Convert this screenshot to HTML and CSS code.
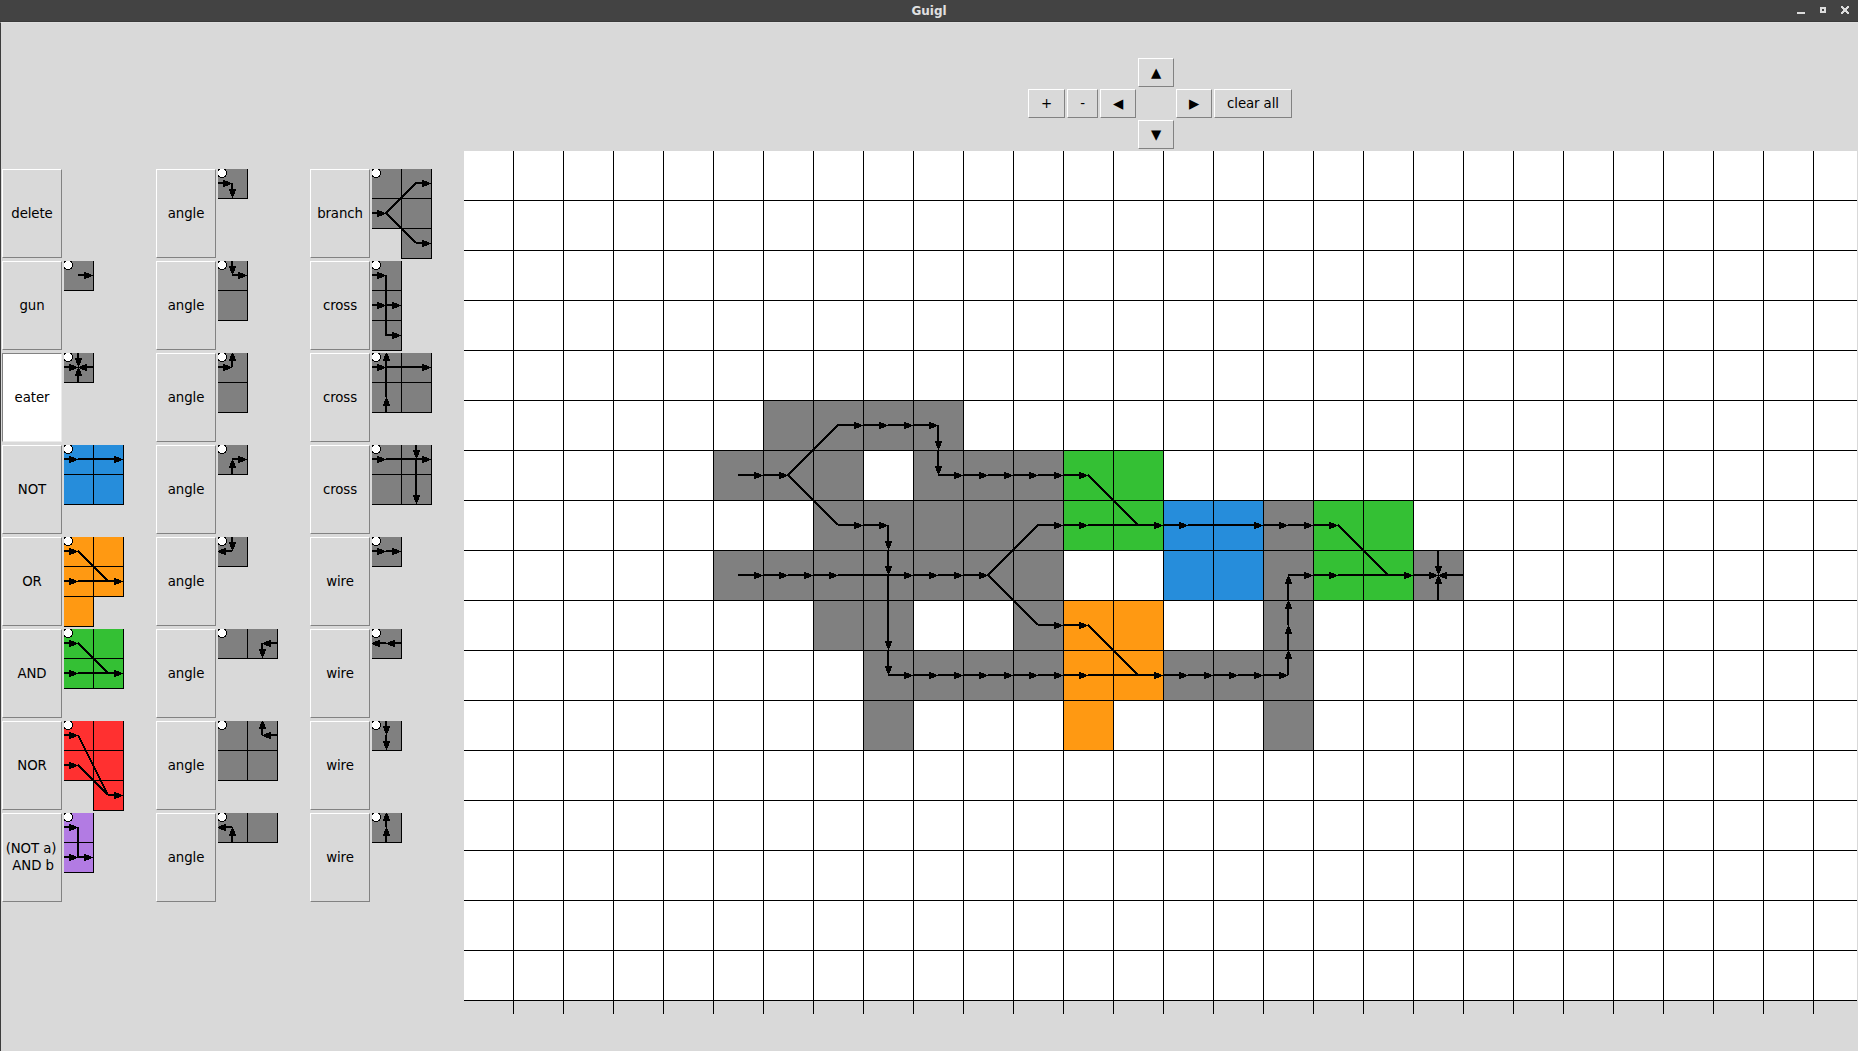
FILE: index.html
```html
<!DOCTYPE html>
<html lang="en">
<head>
<meta charset="utf-8">
<title>Guigl</title>
<link rel="stylesheet" href="styles.css">
</head>
<body>
<header class="titlebar">
  <span class="title">Guigl</span>
  <svg class="winbtns" width="110" height="21" shape-rendering="crispEdges">
    <rect x="49" y="12" width="8" height="2"/>
    <path fill-rule="evenodd" d="M72 7h6v6h-6zM74 9v2h2v-2z"/>
    <path d="M93 6h2v1h1v1h2v-1h1v-1h2v2h-1v1h-1v2h1v1h1v2h-2v-1h-1v-1h-2v1h-1v1h-2v-2h1v-1h1v-2h-1v-1h-1z"/>
  </svg>
</header>
<main class="window">
  <nav class="controls">
    <button class="btn zoom-in">+</button>
    <button class="btn zoom-out">-</button>
    <button class="btn left">◀</button>
    <button class="btn up">▲</button>
    <button class="btn down">▼</button>
    <button class="btn right">▶</button>
    <button class="btn clear">clear all</button>
  </nav>
  <div class="work">
    <section class="palette">
      <div class="tool"><button class="btn">delete</button></div>
      <div class="tool"><button class="btn">gun</button><svg class="piece wire" viewBox="1 1 61 90"><path class="cell" d="M.5.5h30v30h-30z"/><circle cx="5" cy="5" r="4.5"/><use href="#r" x="15" y="15"/></svg></div>
      <div class="tool"><button class="btn selected">eater</button><svg class="piece wire" viewBox="1 1 61 90"><path class="cell" d="M.5.5h30v30h-30z"/><circle cx="5" cy="5" r="4.5"/><use href="#r" x="0" y="15"/><use href="#l" x="30" y="15"/><use href="#d" x="15" y="0"/><use href="#u" x="15" y="30"/></svg></div>
      <div class="tool"><button class="btn">NOT</button><svg class="piece not" viewBox="1 1 61 90"><path class="cell" d="M.5.5h60v60h-60zM30.5.5v60M.5 30.5h60"/><circle cx="5" cy="5" r="4.5"/><use href="#r" x="0" y="15"/><path class="ln" d="M15 15H45"/><use href="#r" x="45" y="15"/></svg></div>
      <div class="tool"><button class="btn">OR</button><svg class="piece or" viewBox="1 1 61 90"><path class="cell" d="M.5.5h60v60h-30v30h-30zM30.5.5v60M.5 30.5h60M.5 60.5h30"/><circle cx="5" cy="5" r="4.5"/><use href="#r" x="0" y="15"/><use href="#r" x="0" y="45"/><path class="ln" d="M15 15L45 45M15 45H45"/><use href="#r" x="45" y="45"/></svg></div>
      <div class="tool"><button class="btn">AND</button><svg class="piece and" viewBox="1 1 61 90"><path class="cell" d="M.5.5h60v60h-60zM30.5.5v60M.5 30.5h60"/><circle cx="5" cy="5" r="4.5"/><use href="#r" x="0" y="15"/><use href="#r" x="0" y="45"/><path class="ln" d="M15 15L45 45M15 45H45"/><use href="#r" x="45" y="45"/></svg></div>
      <div class="tool"><button class="btn">NOR</button><svg class="piece nor" viewBox="1 1 61 90"><path class="cell" d="M.5.5h60v90h-30v-30h-30zM30.5.5v60M.5 30.5h60M30.5 60.5h30"/><circle cx="5" cy="5" r="4.5"/><use href="#r" x="0" y="15"/><use href="#r" x="0" y="45"/><path class="ln" d="M15 15L45 75M15 45L45 75"/><use href="#r" x="45" y="75"/></svg></div>
      <div class="tool"><button class="btn two-line">(NOT a)<br>&nbsp;AND b</button><svg class="piece nand" viewBox="1 1 61 90"><path class="cell" d="M.5.5h30v60h-30zM.5 30.5h30"/><circle cx="5" cy="5" r="4.5"/><use href="#r" x="0" y="15"/><use href="#r" x="0" y="45"/><path class="ln" d="M15 15V46"/><use href="#r" x="15" y="45"/></svg></div>

      <div class="tool"><button class="btn">angle</button><svg class="piece wire" viewBox="1 1 61 90"><path class="cell" d="M.5.5h30v30h-30z"/><circle cx="5" cy="5" r="4.5"/><use href="#r" x="0" y="15"/><use href="#d" x="15" y="15"/></svg></div>
      <div class="tool"><button class="btn">angle</button><svg class="piece wire" viewBox="1 1 61 90"><path class="cell" d="M.5.5h30v60h-30zM.5 30.5h30"/><circle cx="5" cy="5" r="4.5"/><use href="#d" x="15" y="0"/><use href="#r" x="15" y="15"/></svg></div>
      <div class="tool"><button class="btn">angle</button><svg class="piece wire" viewBox="1 1 61 90"><path class="cell" d="M.5.5h30v60h-30zM.5 30.5h30"/><circle cx="5" cy="5" r="4.5"/><use href="#r" x="0" y="15"/><use href="#u" x="15" y="15"/></svg></div>
      <div class="tool"><button class="btn">angle</button><svg class="piece wire" viewBox="1 1 61 90"><path class="cell" d="M.5.5h30v30h-30z"/><circle cx="5" cy="5" r="4.5"/><use href="#u" x="15" y="30"/><use href="#r" x="15" y="15"/></svg></div>
      <div class="tool"><button class="btn">angle</button><svg class="piece wire" viewBox="1 1 61 90"><path class="cell" d="M.5.5h30v30h-30z"/><circle cx="5" cy="5" r="4.5"/><use href="#d" x="15" y="0"/><use href="#l" x="15" y="15"/></svg></div>
      <div class="tool"><button class="btn">angle</button><svg class="piece wire" viewBox="1 1 61 90"><path class="cell" d="M.5.5h60v30h-60zM30.5.5v30"/><circle cx="5" cy="5" r="4.5"/><use href="#l" x="60" y="15"/><use href="#d" x="45" y="15"/></svg></div>
      <div class="tool"><button class="btn">angle</button><svg class="piece wire" viewBox="1 1 61 90"><path class="cell" d="M.5.5h60v60h-60zM30.5.5v60M.5 30.5h60"/><circle cx="5" cy="5" r="4.5"/><use href="#l" x="60" y="15"/><use href="#u" x="45" y="15"/></svg></div>
      <div class="tool"><button class="btn">angle</button><svg class="piece wire" viewBox="1 1 61 90"><path class="cell" d="M.5.5h60v30h-60zM30.5.5v30"/><circle cx="5" cy="5" r="4.5"/><use href="#u" x="15" y="30"/><use href="#l" x="15" y="15"/></svg></div>

      <div class="tool"><button class="btn">branch</button><svg class="piece wire" viewBox="1 1 61 90"><path class="cell" d="M.5.5h60v90h-30v-30h-30zM30.5.5v60M.5 30.5h60M30.5 60.5h30"/><circle cx="5" cy="5" r="4.5"/><use href="#r" x="0" y="45"/><path class="ln" d="M45 15L15 45L45 75"/><use href="#r" x="45" y="15"/><use href="#r" x="45" y="75"/></svg></div>
      <div class="tool"><button class="btn">cross</button><svg class="piece wire" viewBox="1 1 61 90"><path class="cell" d="M.5.5h30v90h-30zM.5 30.5h30M.5 60.5h30"/><circle cx="5" cy="5" r="4.5"/><use href="#r" x="0" y="15"/><use href="#r" x="0" y="45"/><use href="#r" x="15" y="45"/><path class="ln" d="M15 15V76"/><use href="#r" x="15" y="75"/></svg></div>
      <div class="tool"><button class="btn">cross</button><svg class="piece wire" viewBox="1 1 61 90"><path class="cell" d="M.5.5h60v60h-60zM30.5.5v60M.5 30.5h60"/><circle cx="5" cy="5" r="4.5"/><use href="#r" x="0" y="15"/><use href="#u" x="15" y="60"/><path class="ln" d="M15 15H45M15 45V15"/><use href="#r" x="45" y="15"/><use href="#u" x="15" y="15"/></svg></div>
      <div class="tool"><button class="btn">cross</button><svg class="piece wire" viewBox="1 1 61 90"><path class="cell" d="M.5.5h60v60h-60zM30.5.5v60M.5 30.5h60"/><circle cx="5" cy="5" r="4.5"/><use href="#r" x="0" y="15"/><use href="#d" x="45" y="0"/><path class="ln" d="M15 15H45M45 15V45"/><use href="#r" x="45" y="15"/><use href="#d" x="45" y="45"/></svg></div>
      <div class="tool"><button class="btn">wire</button><svg class="piece wire" viewBox="1 1 61 90"><path class="cell" d="M.5.5h30v30h-30z"/><circle cx="5" cy="5" r="4.5"/><use href="#r" x="0" y="15"/><use href="#r" x="15" y="15"/></svg></div>
      <div class="tool"><button class="btn">wire</button><svg class="piece wire" viewBox="1 1 61 90"><path class="cell" d="M.5.5h30v30h-30z"/><circle cx="5" cy="5" r="4.5"/><use href="#l" x="30" y="15"/><use href="#l" x="15" y="15"/></svg></div>
      <div class="tool"><button class="btn">wire</button><svg class="piece wire" viewBox="1 1 61 90"><path class="cell" d="M.5.5h30v30h-30z"/><circle cx="5" cy="5" r="4.5"/><use href="#d" x="15" y="0"/><use href="#d" x="15" y="15"/></svg></div>
      <div class="tool"><button class="btn">wire</button><svg class="piece wire" viewBox="1 1 61 90"><path class="cell" d="M.5.5h30v30h-30z"/><circle cx="5" cy="5" r="4.5"/><use href="#u" x="15" y="30"/><use href="#u" x="15" y="15"/></svg></div>
    </section>

    <svg class="board" width="1393" height="863" viewBox="1 1 1393 863" shape-rendering="crispEdges">
      <defs>
        <!-- arrow heads, tip at the origin -->
        <path id="hr" d="M0 0V1H-2V2H-4V3H-7V4H-9V-3H-7V-2H-4V-1H-2V0z"/>
        <path id="hl" d="M0 0V1H2V2H4V3H7V4H9V-3H7V-2H4V-1H2V0z"/>
        <path id="hd" d="M0 0H1V-2H2V-4H3V-7H4V-9H-3V-7H-2V-4H-1V-2H0z"/>
        <path id="hu" d="M0 0H1V2H2V4H3V7H4V9H-3V7H-2V4H-1V2H0z"/>
        <!-- 15px arrows for the palette -->
        <g id="r"><path class="ln" d="M0 0H7"/><use href="#hr" x="15"/></g>
        <g id="l"><path class="ln" d="M0 0H-7"/><use href="#hl" x="-15"/></g>
        <g id="d"><path class="ln" d="M0 0V7"/><use href="#hd" y="15"/></g>
        <g id="u"><path class="ln" d="M0 0V-7"/><use href="#hu" y="-15"/></g>
        <!-- 25px arrows for the board -->
        <g id="R"><path class="ln" d="M0 0H17"/><use href="#hr" x="25"/></g>
        <g id="L"><path class="ln" d="M0 0H-17"/><use href="#hl" x="-25"/></g>
        <g id="D"><path class="ln" d="M0 0V17"/><use href="#hd" y="25"/></g>
        <g id="U"><path class="ln" d="M0 0V-17"/><use href="#hu" y="-25"/></g>
        <pattern id="grid" width="50" height="50" patternUnits="userSpaceOnUse"><path d="M0 0H50V1H1V50H0z"/></pattern>
      </defs>
      <rect width="1394" height="850" fill="#fff"/>
      <g fill="#808080">
        <path d="M300 250h200v50h-200zM250 300h150v50h-150zM450 300h150v50h-150zM350 350h250v50h-250zM250 400h350v50h-350zM350 450h100v50h-100zM550 450h50v50h-50zM400 500h200v50h-200zM400 550h50v50h-50z"/>
        <path d="M800 350h50v250h-50zM700 500h100v50h-100zM950 400h50v50h-50z"/>
      </g>
      <path fill="#34c034" d="M600 300h100v100h-100zM850 350h100v100h-100z"/>
      <path fill="#268ddb" d="M700 350h100v100h-100z"/>
      <path fill="#ff9912" d="M600 450h100v100h-50v50h-50z"/>
      <rect width="1394" height="851" fill="url(#grid)"/>
      <path d="M50.5 851V864M100.5 851V864M150.5 851V864M200.5 851V864M250.5 851V864M300.5 851V864M350.5 851V864M400.5 851V864M450.5 851V864M500.5 851V864M550.5 851V864M600.5 851V864M650.5 851V864M700.5 851V864M750.5 851V864M800.5 851V864M850.5 851V864M900.5 851V864M950.5 851V864M1000.5 851V864M1050.5 851V864M1100.5 851V864M1150.5 851V864M1200.5 851V864M1250.5 851V864M1300.5 851V864M1350.5 851V864" stroke="#000"/>
      <path class="ln" d="M375 275L325 325L375 375M575 375L525 425L575 475M625 325L675 375M625 475L675 525M875 375L925 425M625 375H675M625 525H675M725 375H775M875 425H925M375 425H425M425 425V475"/>
      <use href="#R" x="375" y="275"/><use href="#R" x="400" y="275"/><use href="#R" x="425" y="275"/><use href="#R" x="450" y="275"/>
      <use href="#D" x="475" y="275"/><use href="#D" x="475" y="300"/>
      <use href="#R" x="275" y="325"/><use href="#R" x="300" y="325"/>
      <use href="#R" x="475" y="325"/><use href="#R" x="500" y="325"/><use href="#R" x="525" y="325"/><use href="#R" x="550" y="325"/><use href="#R" x="575" y="325"/><use href="#R" x="600" y="325"/>
      <use href="#R" x="375" y="375"/><use href="#R" x="400" y="375"/>
      <use href="#D" x="425" y="375"/><use href="#D" x="425" y="400"/><use href="#D" x="425" y="475"/><use href="#D" x="425" y="500"/>
      <use href="#R" x="575" y="375"/><use href="#R" x="600" y="375"/><use href="#R" x="675" y="375"/><use href="#R" x="700" y="375"/><use href="#R" x="775" y="375"/><use href="#R" x="800" y="375"/><use href="#R" x="825" y="375"/><use href="#R" x="850" y="375"/>
      <use href="#R" x="275" y="425"/><use href="#R" x="300" y="425"/><use href="#R" x="325" y="425"/><use href="#R" x="350" y="425"/><use href="#R" x="425" y="425"/><use href="#R" x="450" y="425"/><use href="#R" x="475" y="425"/><use href="#R" x="500" y="425"/>
      <use href="#R" x="825" y="425"/><use href="#R" x="850" y="425"/><use href="#R" x="925" y="425"/><use href="#R" x="950" y="425"/>
      <use href="#D" x="975" y="400"/><use href="#U" x="975" y="450"/><use href="#L" x="1000" y="425"/>
      <use href="#R" x="575" y="475"/><use href="#R" x="600" y="475"/>
      <use href="#R" x="425" y="525"/><use href="#R" x="450" y="525"/><use href="#R" x="475" y="525"/><use href="#R" x="500" y="525"/><use href="#R" x="525" y="525"/><use href="#R" x="550" y="525"/><use href="#R" x="575" y="525"/><use href="#R" x="600" y="525"/><use href="#R" x="675" y="525"/><use href="#R" x="700" y="525"/><use href="#R" x="725" y="525"/><use href="#R" x="750" y="525"/><use href="#R" x="775" y="525"/><use href="#R" x="800" y="525"/>
      <use href="#U" x="825" y="525"/><use href="#U" x="825" y="500"/><use href="#U" x="825" y="475"/><use href="#U" x="825" y="450"/>
    </svg>
  </div>
</main>
</body>
</html>
```
FILE: styles.css
```css
* { box-sizing: border-box; }
body {
  margin: 0;
  height: 1051px;
  display: flex;
  flex-direction: column;
  overflow: hidden;
  background: #d9d9d9;
  font: 13.33px/17px "DejaVu Sans", sans-serif;
  color: #000;
}
.titlebar {
  height: 22px;
  display: grid;
  grid-template-columns: 110px 1fr 110px;
  background: #434343;
  border-bottom: 1px solid #3a3a3a;
}
.title {
  grid-column: 2;
  text-align: center;
  font-weight: bold;
  font-size: 12px;
  line-height: 22px;
  color: #e0e0e0;
}
.winbtns { fill: #dcdcdc; }
.window {
  flex: 1;
  display: flex;
  flex-direction: column;
  border-left: 1px solid #3c3c3c;
  border-top: 1px solid #dfdfdf;
}
.controls {
  display: grid;
  grid-template: repeat(3, 29px) / 37px 31px 36px 36px 36px 78px;
  gap: 2px;
  padding: 35px 0 2px 1027px;
}
.zoom-in { grid-area: 2 / 1; }
.zoom-out { grid-area: 2 / 2; }
.left { grid-area: 2 / 3; }
.up { grid-area: 1 / 4; }
.down { grid-area: 3 / 4; }
.right { grid-area: 2 / 5; }
.clear { grid-area: 2 / 6; }
.btn {
  margin: 0;
  padding: 0;
  border: 1px solid;
  border-color: #fff #828282 #828282 #fff;
  border-radius: 0;
  background: #d9d9d9;
  font: inherit;
  letter-spacing: -0.1px;
  color: #000;
  white-space: nowrap;
}
.work { display: flex; }
.palette {
  width: 463px;
  padding: 18px 0 0 1px;
  display: grid;
  grid-template: repeat(8, 92px) / repeat(3, 154px);
  grid-auto-flow: column;
}
.tool {
  display: flex;
  align-items: flex-start;
  gap: 2px;
}
.tool .btn { width: 60px; height: 89px; }
.tool .two-line { padding: 0 2px 2px 0; }
.tool .selected {
  background: #fff;
  border-color: #828282 #ececec #ececec #828282;
}
.piece {
  width: 61px;
  height: 90px;
  stroke-width: 1;
  shape-rendering: crispEdges;
}
.cell { stroke: #000; }
.piece circle { fill: #fff; stroke: #000; }
.wire .cell { fill: #808080; }
.not .cell { fill: #268ddb; }
.or .cell { fill: #ff9912; }
.and .cell { fill: #34c034; }
.nor .cell { fill: #ff3030; }
.nand .cell { fill: #b27be3; }
.ln { fill: none; stroke: #000; stroke-width: 2; }
.board { flex: none; }
```
